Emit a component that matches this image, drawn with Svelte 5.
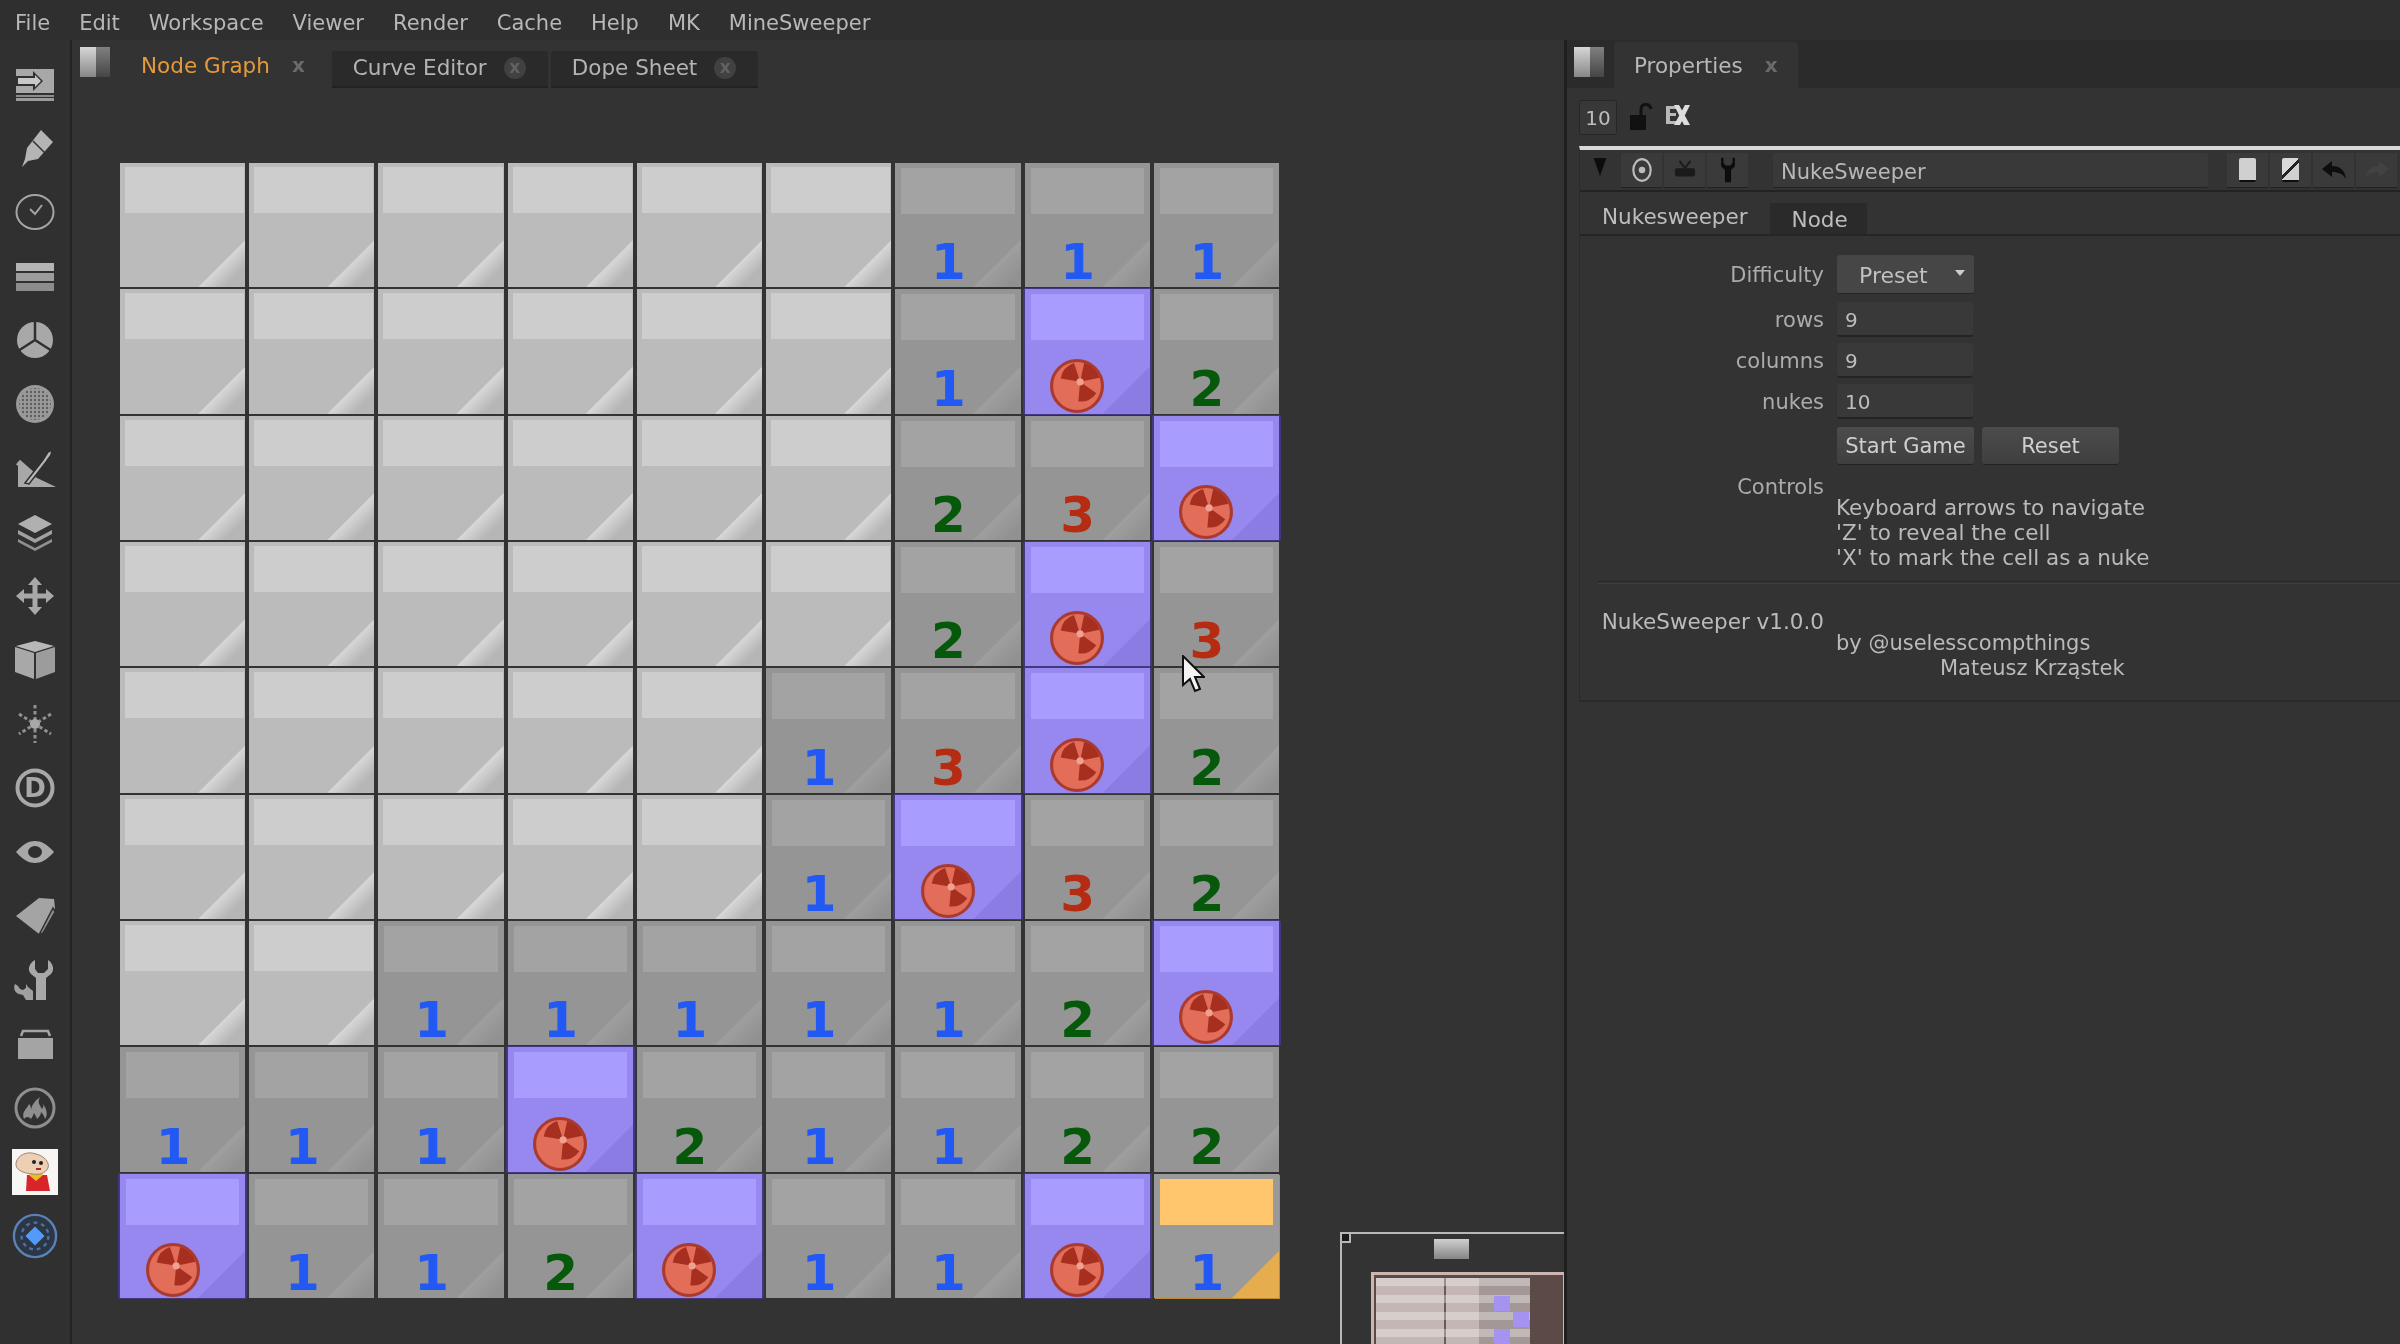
<script>
  const menu = ['File', 'Edit', 'Workspace', 'Viewer', 'Render', 'Cache', 'Help', 'MK', 'MineSweeper'];

  // . hidden, N nuke, S selected cell, digits revealed
  const board = [
    '......111',
    '......1N2',
    '......23N',
    '......2N3',
    '.....13N2',
    '.....1N32',
    '..111112N',
    '111N21122',
    'N112N11NS'
  ];
  const cells = board.join('').split('');
  // the selected cell still shows its number
  const label = (c) => (c === 'S' ? '1' : c);

  // trefoil sits up and right of the circle's centre
  function blade(a0, a1, r = 19) {
    const p = (a) => `${(29 + r * Math.cos((a * Math.PI) / 180)).toFixed(1)} ${(22 + r * Math.sin((a * Math.PI) / 180)).toFixed(1)}`;
    return `M29 22L${p(a0)}A${r} ${r} 0 0 1 ${p(a1)}Z`;
  }
  const blades = [blade(-170, -108), blade(-78, -12), blade(35, 95)];

  const mini = Array.from({ length: 9 });
</script>

<div class="app">
  <nav class="menubar">
    {#each menu as item}
      <span>{item}</span>
    {/each}
  </nav>

  <div class="main">
    <aside class="toolbar">
      <svg viewBox="0 0 44 44">
        <rect x="3" y="7" width="38" height="24" fill="#a8a8a8" />
        <path d="M3 14h17v-5l10 10-10 10v-5H3z" fill="#303030" />
        <path d="M5 16h17v-3l6 6-6 6v-3H5z" fill="#c8c8c8" />
        <rect x="3" y="33" width="38" height="2" fill="#8c8c8c" />
        <rect x="3" y="36" width="38" height="3" fill="#9a9a9a" />
      </svg>
      <svg viewBox="0 0 44 44">
        <path d="M28 4l12 12-15 17-10 2-6 6 3-8 2-11z" fill="#b4b4b4" />
        <path d="M20 15l12 12" stroke="#303030" stroke-width="1.500" />
      </svg>
      <svg viewBox="0 0 44 44">
        <ellipse cx="22" cy="22" rx="18.500" ry="17" fill="none" stroke="#a4a4a4" stroke-width="2" />
        <path d="M17 19l5 5 7-9" fill="none" stroke="#a4a4a4" stroke-width="2" />
      </svg>
      <svg viewBox="0 0 44 44" class="bars">
        <rect x="3" y="9" width="38" height="8" fill="#b4b4b4" />
        <rect x="3" y="19" width="38" height="8" fill="#9c9c9c" />
        <rect x="3" y="29" width="38" height="8" fill="#8c8c8c" />
      </svg>
      <svg viewBox="0 0 44 44">
        <circle cx="22" cy="22" r="18" fill="#a8a8a8" />
        <path d="M22 3v19M22 22L5 33M22 22l17 11" stroke="#303030" stroke-width="2.500" />
      </svg>
      <svg viewBox="0 0 44 44">
        <defs>
          <pattern id="mesh" width="4" height="4" patternUnits="userSpaceOnUse">
            <circle cx="2" cy="2" r="1.200" fill="#5e5e5e" />
          </pattern>
        </defs>
        <circle cx="22" cy="22" r="19" fill="#9a9a9a" />
        <circle cx="22" cy="22" r="16" fill="url(#mesh)" />
      </svg>
      <svg viewBox="0 0 44 44">
        <path d="M5 16v25h38L22 31z" fill="#a8a8a8" />
        <path d="M5 16l17 15" stroke="#a8a8a8" stroke-width="6" />
        <path d="M12 37L30 14l5-8 4-2-1 5-5 7L16 38z" fill="#b8b8b8" stroke="#303030" stroke-width="1.500" />
      </svg>
      <svg viewBox="0 0 44 44">
        <path d="M22 5l17 9-17 9-17-9z" fill="#b0b0b0" />
        <path d="M5 20l17 9 17-9v4l-17 9-17-9z" fill="#a0a0a0" />
        <path d="M5 29l17 9 17-9v3l-17 9-17-9z" fill="#909090" />
      </svg>
      <svg viewBox="0 0 44 44">
        <path d="M22 3l7 8h-4.500v8.500H33V15l8 7-8 7v-4.500h-8.500V33H29l-7 8-7-8h4.500v-8.500H11V29l-8-7 8-7v4.500h8.500V11H15z" fill="#a8a8a8" />
      </svg>
      <svg viewBox="0 0 44 44">
        <path d="M3 8l19-5 19 5-19 6z" fill="#b8b8b8" />
        <path d="M2 9l19 6v26L2 34z" fill="#a8a8a8" />
        <path d="M42 9l-19 6v26l19-7z" fill="#9c9c9c" />
      </svg>
      <svg viewBox="0 0 44 44">
        <g stroke="#909090" stroke-width="3" stroke-dasharray="3.500 2.500">
          <path d="M22 3v38M6 12l32 20M38 12L6 32" />
        </g>
        <circle cx="22" cy="22" r="5" fill="#a8a8a8" />
      </svg>
      <svg viewBox="0 0 44 44">
        <circle cx="22" cy="22" r="17.500" fill="#2f2f2f" stroke="#a8a8a8" stroke-width="4" />
        <text x="22" y="31" text-anchor="middle" class="glyph">D</text>
      </svg>
      <svg viewBox="0 0 44 44">
        <path d="M3 22C10 14 16 11 22 11s12 3 19 11c-7 8-13 11-19 11S10 30 3 22z" fill="#a8a8a8" />
        <ellipse cx="22" cy="22" rx="7" ry="6" fill="#2f2f2f" />
      </svg>
      <svg viewBox="0 0 44 44">
        <path d="M3 22L26 4l15 1 1 9-16 26z" fill="#a4a4a4" />
        <path d="M40 14l2 4-12 21-4 2z" fill="#8c8c8c" stroke="#303030" stroke-width="1.500" />
      </svg>
      <svg viewBox="0 0 44 44">
        <path d="M22 2c-6 3-8 10-4 14l5 4v22h10V20l5-4c4-4 2-11-3-14v9l-4 4h-6l-3-4z" fill="#a8a8a8" />
        <path d="M2 26c-2 4 0 9 4 10l4 1 3 5h7V33l-5-4-2-3v4l-3 2-3-1-2-3z" fill="#a0a0a0" />
      </svg>
      <svg viewBox="0 0 44 44">
        <rect x="5" y="16" width="35" height="21" fill="#a4a4a4" />
        <path d="M8 14l2-5h25l2 5" fill="none" stroke="#a4a4a4" stroke-width="2.500" />
      </svg>
      <svg viewBox="0 0 44 44">
        <circle cx="22" cy="22" r="19" fill="none" stroke="#8e8e8e" stroke-width="3" />
        <path d="M11 33c-3-7 3-10 5-15 2 2 2 4 2 6 1-6 5-10 9-13-3 6 0 8 2 12 1-1 2-3 1-5 4 5 5 11 2 15-1-4-3-6-4-7 0 3-2 5-4 7-1-3-2-4-3-6-1 3-2 4-3 6-2-2-4-3-7 0z" fill="#8e8e8e" />
      </svg>
      <svg viewBox="0 0 46 46" class="stewie">
        <rect width="46" height="46" fill="#f8f6f2" />
        <path d="M15 26h20l3 16H14z" fill="#d8252a" />
        <path d="M17 26l7 6 7-6-2-3H20z" fill="#e7c020" />
        <path d="M4 14c2-9 12-12 20-9 8 2 14 8 12 14-3 6-9 7-16 6C11 24 3 21 4 14z" fill="#edd0b4" stroke="#9c8470" />
        <circle cx="22" cy="13" r="2" fill="#222" />
        <circle cx="29" cy="14" r="2" fill="#222" />
        <path d="M24 20h5" stroke="#a03020" stroke-width="2" />
      </svg>
      <svg viewBox="0 0 48 48" class="wide">
        <circle cx="24" cy="24" r="22" fill="#2d3644" stroke="#5a82b8" stroke-width="2.500" />
        <circle cx="24" cy="24" r="14" fill="none" stroke="#4a72a8" stroke-width="2.500" stroke-dasharray="4 4" />
        <path d="M24 14l10 10-10 10-10-10z" fill="#539bfa" />
      </svg>
    </aside>

    <section class="graph">
      <header class="tabs">
        <span class="pane-icon"></span>
        <span class="tab active">Node Graph<i class="x">x</i></span>
        <span class="tab">Curve Editor<i class="x dot">x</i></span>
        <span class="tab">Dope Sheet<i class="x dot">x</i></span>
      </header>

      <div class="board">
        {#each cells as c}
          <div class="cell" class:hidden={c === '.'} class:nuke={c === 'N'} class:selected={c === 'S'}>
            <div class="band"></div>
            <div class="content">
              {#if c === 'N'}
                <svg class="bomb" viewBox="0 0 52 52">
                  <circle cx="26" cy="26" r="24.500" fill="#e26d58" />
                  {#each blades as d}
                    <path {d} fill="#a72f20" />
                  {/each}
                  <circle cx="29" cy="22" r="3.500" fill="#f0a090" />
                  <circle cx="26" cy="26" r="24.500" fill="none" stroke="#ab3a2e" stroke-width="3" />
                </svg>
              {:else if c !== '.'}
                <span class="num n{label(c)}">{label(c)}</span>
              {/if}
            </div>
          </div>
        {/each}
      </div>

      <div class="minimap">
        <span class="corner"></span>
        <span class="mini-node"></span>
        <div class="mini-screen">
          <div class="mini-board">
            {#each mini as _, i}
              <span class="stripe"></span>
            {/each}
            <b class="p1"></b>
            <b class="p2"></b>
            <b class="p3"></b>
          </div>
        </div>
      </div>

      <svg class="cursor" viewBox="0 0 24 38">
        <path d="M2 1v29l7-6 5 12 5-2-5-12h9z" fill="#f4f4f4" stroke="#111" stroke-width="2" />
      </svg>
    </section>

    <section class="props">
      <header class="tabs ptabs">
        <span class="pane-icon"></span>
        <span class="tab active">Properties<i class="x">x</i></span>
      </header>

      <div class="prop-tools">
        <span class="count">10</span>
        <svg class="lock" viewBox="0 0 24 28">
          <rect x="1" y="12" width="16" height="15" fill="#111" />
          <path d="M12 12V6c0-6 9-6 10 0" fill="none" stroke="#111" stroke-width="3" />
        </svg>
        <svg class="ex" viewBox="0 0 26 24">
          <path d="M1 3h12v3H5v4h6v3H5v5h8v3H1z" fill="#b8b8b8" />
          <path d="M9 2h5l11 20h-6zM20 2h5L15 22H9z" fill="#dedede" />
        </svg>
      </div>

      <div class="node-panel">
        <div class="node-head">
          <svg class="tri" viewBox="0 0 14 20"><path d="M0 0h14L7 20z" fill="#0c0c0c" /></svg>
          <div class="btn-group">
            <span>
              <svg viewBox="0 0 20 24"><ellipse cx="10" cy="12" rx="8" ry="10" fill="none" stroke="#bbb" stroke-width="2" /><circle cx="10" cy="12" r="3" fill="#bbb" /></svg>
            </span>
            <span>
              <svg viewBox="0 0 24 24"><path d="M6 2l6 8 6-8" stroke="#1a1a1a" stroke-width="2" fill="none" /><rect x="1" y="10" width="22" height="9" rx="2" fill="#1a1a1a" /></svg>
            </span>
            <span>
              <svg viewBox="0 0 22 34"><path d="M2 1v9c0 4 4 5 5 7v16h8V17c1-2 5-3 5-7V1l-3 0v7l-3 3H8L5 8V1z" fill="#0c0c0c" /></svg>
            </span>
          </div>
          <div class="node-name">NukeSweeper</div>
          <div class="head-right">
            <span><i class="page"></i></span>
            <span><i class="page half"></i></span>
            <span>
              <svg viewBox="0 0 26 20"><path d="M1 9l10-8v5c8 0 13 4 14 13-3-5-7-7-14-7v5z" fill="#0e0e0e" /></svg>
            </span>
            <span>
              <svg viewBox="0 0 26 20"><path d="M25 9L15 1v5C7 6 2 10 1 19c3-5 7-7 14-7v5z" fill="#424242" /></svg>
            </span>
          </div>
        </div>

        <div class="sub-tabs">
          <span class="sub active">Nukesweeper</span>
          <span class="sub">Node</span>
        </div>

        <div class="form">
          <div class="row tall">
            <label>Difficulty</label>
            <div class="select">Preset<em></em></div>
          </div>
          <div class="row"><label>rows</label><div class="input">9</div></div>
          <div class="row"><label>columns</label><div class="input">9</div></div>
          <div class="row"><label>nukes</label><div class="input">10</div></div>
          <div class="row actions">
            <label></label>
            <button>Start Game</button>
            <button>Reset</button>
          </div>
          <div class="row text-row">
            <label>Controls</label>
          </div>
          <div class="notes">
            <p>Keyboard arrows to navigate</p>
            <p>'Z' to reveal the cell</p>
            <p>'X' to mark the cell as a nuke</p>
          </div>
          <hr />
          <div class="row credit">
            <label>NukeSweeper v1.0.0</label>
          </div>
          <div class="notes by">
            <p>by @uselesscompthings</p>
            <p class="author">Mateusz Krząstek</p>
          </div>
        </div>
      </div>
    </section>
  </div>
</div>

<style>
  :global(body) {
    margin: 0;
    background: #333;
  }

  .app {
    width: 2400px;
    height: 1344px;
    display: flex;
    flex-direction: column;
    overflow: hidden;
    background: #333;
    color: #bdbdbd;
    font-family: "DejaVu Sans", sans-serif;
    font-size: 21px;
    filter: blur(0.7px);
  }

  .menubar {
    height: 40px;
    flex: none;
    display: flex;
    align-items: center;
    gap: 29px;
    padding: 6px 0 0 15px;
    box-sizing: border-box;
    background: #2f2f2f;
    color: #b8b8b8;
  }

  .main {
    flex: 1;
    display: flex;
    min-height: 0;
  }

  .toolbar {
    width: 72px;
    flex: none;
    display: flex;
    flex-direction: column;
    align-items: center;
    gap: 20px;
    padding-top: 22px;
    box-sizing: border-box;
    border-right: 2px solid #232323;
    background: #303030;
  }

  .toolbar svg {
    width: 44px;
    height: 44px;
    flex: none;
  }

  .toolbar .stewie,
  .toolbar .wide {
    width: 46px;
    height: 46px;
    margin: -1px 0;
  }

  .glyph {
    font-family: "DejaVu Sans", sans-serif;
    font-weight: bold;
    font-size: 26px;
    fill: #a8a8a8;
  }

  .graph {
    position: relative;
    width: 1492px;
    flex: none;
    border-right: 3px solid #1f1f1f;
    box-sizing: content-box;
    background: #333;
  }

  .tabs {
    height: 48px;
    display: flex;
    align-items: flex-end;
    padding: 3px 0 0 8px;
    box-sizing: border-box;
  }

  .pane-icon {
    width: 30px;
    height: 30px;
    margin: 0 10px 11px 0;
    align-self: flex-end;
    background-image: linear-gradient(180deg, rgba(255, 255, 255, 0.15), rgba(0, 0, 0, 0.35)), linear-gradient(90deg, #cfcfcf 0 55%, #6a6a6a 55%);
  }

  .tab {
    height: 37px;
    margin-right: 3px;
    padding: 0 22px 4px 21px;
    box-sizing: border-box;
    display: flex;
    align-items: center;
    gap: 17px;
    background: #2a2a2a;
    border-radius: 3px 3px 0 0;
    color: #b4b4b4;
    font-size: 21.500px;
    box-shadow: inset 0 -2px 0 #222;
  }

  .tab.active {
    height: 46px;
    gap: 22px;
    background: #333;
    color: #e59a3c;
    box-shadow: none;
    padding: 0 24px 0 21px;
  }

  .ptabs .tab.active {
    color: #b8b8b8;
    padding: 0 20px 0 20px;
    gap: 22px;
  }

  .x {
    font-style: normal;
    font-weight: bold;
    font-size: 20px;
    color: #6a6a6a;
  }

  .x.dot {
    width: 22px;
    height: 22px;
    border-radius: 50%;
    background: #414141;
    text-align: center;
    line-height: 20px;
    font-size: 17px;
    color: #626262;
  }

  .board {
    width: 1159px;
    height: 1135px;
    margin: 75px 0 0 48px;
    display: grid;
    grid-template-columns: repeat(9, 1fr);
    grid-template-rows: repeat(9, 1fr);
    column-gap: 4px;
    row-gap: 2px;
    background: #333;
  }

  .cell {
    position: relative;
    display: flex;
    flex-direction: column;
    background: #959595;
    --band: #a3a3a3;
    --corner: linear-gradient(135deg, #9f9f9f 50%, #919191 85%);
  }

  .cell::after {
    content: '';
    position: absolute;
    right: 0;
    bottom: 0;
    width: 47px;
    height: 47px;
    background: var(--corner);
    clip-path: polygon(100% 0, 100% 100%, 0 100%);
  }

  .cell.hidden {
    background: #bbb;
    --band: #cdcdcd;
    --corner: linear-gradient(135deg, #d8d8d8 50%, #b6b6b6 78%);
  }

  .cell.hidden .band {
    margin: 4px 1px 0 5px;
  }

  .cell.nuke {
    background: #9688ef;
    --band: #a89dff;
    --corner: #8a7ce2;
    box-shadow: 0 0 0 1px #41397f, -2px 0 0 #41397f, 2px 0 0 #41397f;
  }

  .cell.selected {
    background: #9a9a9a;
    --band: #ffc66d;
    --corner: #e6ad4f;
    box-shadow: 1px 1px 0 #c08a30;
  }

  .band {
    height: 46px;
    margin: 5px 6px 0;
    flex: none;
    background: var(--band);
  }

  .content {
    position: relative;
    z-index: 1;
    flex: 1;
    display: flex;
    align-items: flex-end;
    justify-content: center;
    padding: 0 19px 6px 0;
  }

  .num {
    display: block;
    font-family: "DejaVu Sans", sans-serif;
    font-weight: bold;
    font-size: 50px;
    line-height: 38px;
    height: 38px;
  }

  .n1 { color: #2259f5; }
  .n2 { color: #06590a; }
  .n3 { color: #b52c12; }

  .bomb {
    width: 54px;
    height: 54px;
    margin: 0 1px -5px 0;
  }

  .minimap {
    position: absolute;
    right: 0;
    bottom: 0;
    width: 224px;
    height: 112px;
    box-sizing: border-box;
    border-top: 2px solid #b8b8b8;
    border-left: 2px solid #b8b8b8;
    overflow: hidden;
  }

  .corner {
    position: absolute;
    left: 0;
    top: 0;
    width: 7px;
    height: 7px;
    border-right: 2px solid #b8b8b8;
    border-bottom: 2px solid #b8b8b8;
    background: #1a1a1a;
  }

  .mini-node {
    position: absolute;
    left: 92px;
    top: 5px;
    width: 35px;
    height: 20px;
    background: linear-gradient(#d0d0d0, #858585);
  }

  .mini-screen {
    position: absolute;
    left: 29px;
    top: 38px;
    width: 195px;
    height: 90px;
    box-sizing: border-box;
    border: 3px solid #cdb6b0;
    background: #5c4a48;
    padding: 3px 33px 0 2px;
    overflow: hidden;
  }

  .mini-board {
    position: relative;
    height: 153px;
    display: flex;
    flex-direction: column;
    background: linear-gradient(90deg, #c4b6b2 0 68px, #6a5a58 68px 70px, #c4b6b2 70px 103px, #a39896 103px);
  }

  .stripe {
    height: 17px;
    flex: none;
    box-sizing: border-box;
    border-top: 8px solid rgba(255, 255, 255, 0.32);
  }

  .mini-board b {
    position: absolute;
    width: 16px;
    height: 15px;
    background: #a593f0;
  }

  .p1 { left: 118px; top: 18px; }
  .p2 { left: 137px; top: 34px; }
  .p3 { left: 118px; top: 51px; }

  .cursor {
    position: absolute;
    left: 1109px;
    top: 615px;
    width: 24px;
    height: 38px;
  }

  .props {
    flex: 1;
    min-width: 0;
    background: #333;
  }

  .ptabs {
    padding-left: 7px;
    background: #2b2b2b;
  }

  .prop-tools {
    height: 58px;
    display: flex;
    align-items: center;
    gap: 12px;
    padding-left: 12px;
  }

  .count {
    width: 38px;
    height: 35px;
    border: 1px solid #262626;
    border-radius: 3px;
    box-sizing: border-box;
    background: #383838;
    text-align: center;
    line-height: 35px;
    font-size: 20px;
  }

  .lock {
    width: 24px;
    height: 28px;
  }

  .ex {
    width: 26px;
    height: 24px;
    margin-top: -4px;
  }

  .node-panel {
    margin-left: 12px;
    height: 556px;
    border-top: 4px solid #d8d8d8;
    border-bottom: 2px solid #2a2a2a;
    box-sizing: border-box;
    border-left: 1px solid #2a2a2a;
  }

  .node-head {
    height: 42px;
    display: flex;
    align-items: center;
    border-bottom: 2px solid #232323;
    box-sizing: border-box;
    padding-left: 13px;
  }

  .tri {
    width: 14px;
    height: 18px;
    margin-right: 14px;
    margin-top: -6px;
  }

  .btn-group,
  .head-right {
    display: flex;
    gap: 2px;
    height: 35px;
  }

  .btn-group span,
  .head-right span {
    width: 41px;
    display: flex;
    align-items: center;
    justify-content: center;
    background: #3a3a3a;
    border-bottom: 1px solid #222;
  }

  .btn-group svg {
    width: 22px;
    height: 26px;
  }

  .head-right svg {
    width: 26px;
    height: 20px;
  }

  .node-name {
    width: 435px;
    height: 35px;
    margin: 0 19px 0 25px;
    padding-left: 8px;
    box-sizing: border-box;
    background: #393939;
    border-radius: 2px;
    border-bottom: 1px solid #232323;
    line-height: 38px;
    color: #b8b8b8;
  }

  .page {
    width: 17px;
    height: 22px;
    background: #d0d0d0;
    border-bottom: 2px solid #0e0e0e;
    border-radius: 2px;
  }

  .page.half {
    background: linear-gradient(135deg, #d8d8d8 0 45%, #222 45% 55%, #d0d0d0 55%);
  }

  .sub-tabs {
    height: 42px;
    display: flex;
    align-items: flex-end;
    border-bottom: 2px solid #252525;
    gap: 3px;
    padding-left: 3px;
  }

  .sub {
    height: 31px;
    padding: 0 19px 0 22px;
    line-height: 34px;
    background: #2a2a2a;
    font-size: 21.500px;
  }

  .sub.active {
    height: 37px;
    padding: 0 19px;
    line-height: 40px;
    background: #333;
  }

  .form {
    padding-top: 19px;
    font-size: 20px;
  }

  .row {
    display: flex;
    align-items: center;
    height: 35px;
    margin-bottom: 6px;
    gap: 13px;
  }

  .row label {
    width: 244px;
    flex: none;
    text-align: right;
    color: #ababab;
    font-size: 21px;
    white-space: nowrap;
  }

  .row.tall {
    height: 39px;
    margin-bottom: 8px;
  }

  .select {
    width: 137px;
    height: 39px;
    padding-left: 22px;
    box-sizing: border-box;
    position: relative;
    background: #464646;
    border-radius: 3px;
    border-bottom: 1px solid #242424;
    line-height: 41px;
    color: #c0c0c0;
    font-size: 22px;
  }

  .select em {
    position: absolute;
    right: 9px;
    top: 15px;
    border: 5px solid transparent;
    border-top: 6px solid #ccc;
    border-bottom: 0;
  }

  .input {
    width: 136px;
    height: 35px;
    padding-left: 8px;
    box-sizing: border-box;
    background: #393939;
    border-radius: 3px;
    border-bottom: 2px solid #242424;
    line-height: 36px;
    color: #bdbdbd;
  }

  .actions {
    height: 38px;
    margin-top: 8px;
    gap: 8px;
  }

  .actions label {
    width: 249px;
  }

  button {
    width: 137px;
    height: 38px;
    border: 0;
    border-bottom: 1px solid #222;
    border-radius: 3px;
    padding: 0;
    background: linear-gradient(#4c4c4c, #3f3f3f);
    color: #cfcfcf;
    font: 21px "DejaVu Sans", sans-serif;
  }

  .text-row {
    height: 26px;
    margin: 9px 0 0;
  }

  .notes {
    padding-left: 256px;
    margin-top: -5px;
    line-height: 25px;
    color: #bababa;
    font-size: 21.500px;
  }

  .notes p {
    margin: 0;
  }

  hr {
    margin: 11px 0 0 18px;
    height: 3px;
    border: 0;
    background: linear-gradient(#222, #444);
  }

  .credit {
    margin: 24px 0 0;
    height: 26px;
  }

  .credit label {
    color: #bbb;
    font-size: 21.500px;
  }

  .by {
    margin-top: -3px;
    font-size: 21px;
  }

  .author {
    padding-left: 104px;
  }
</style>
